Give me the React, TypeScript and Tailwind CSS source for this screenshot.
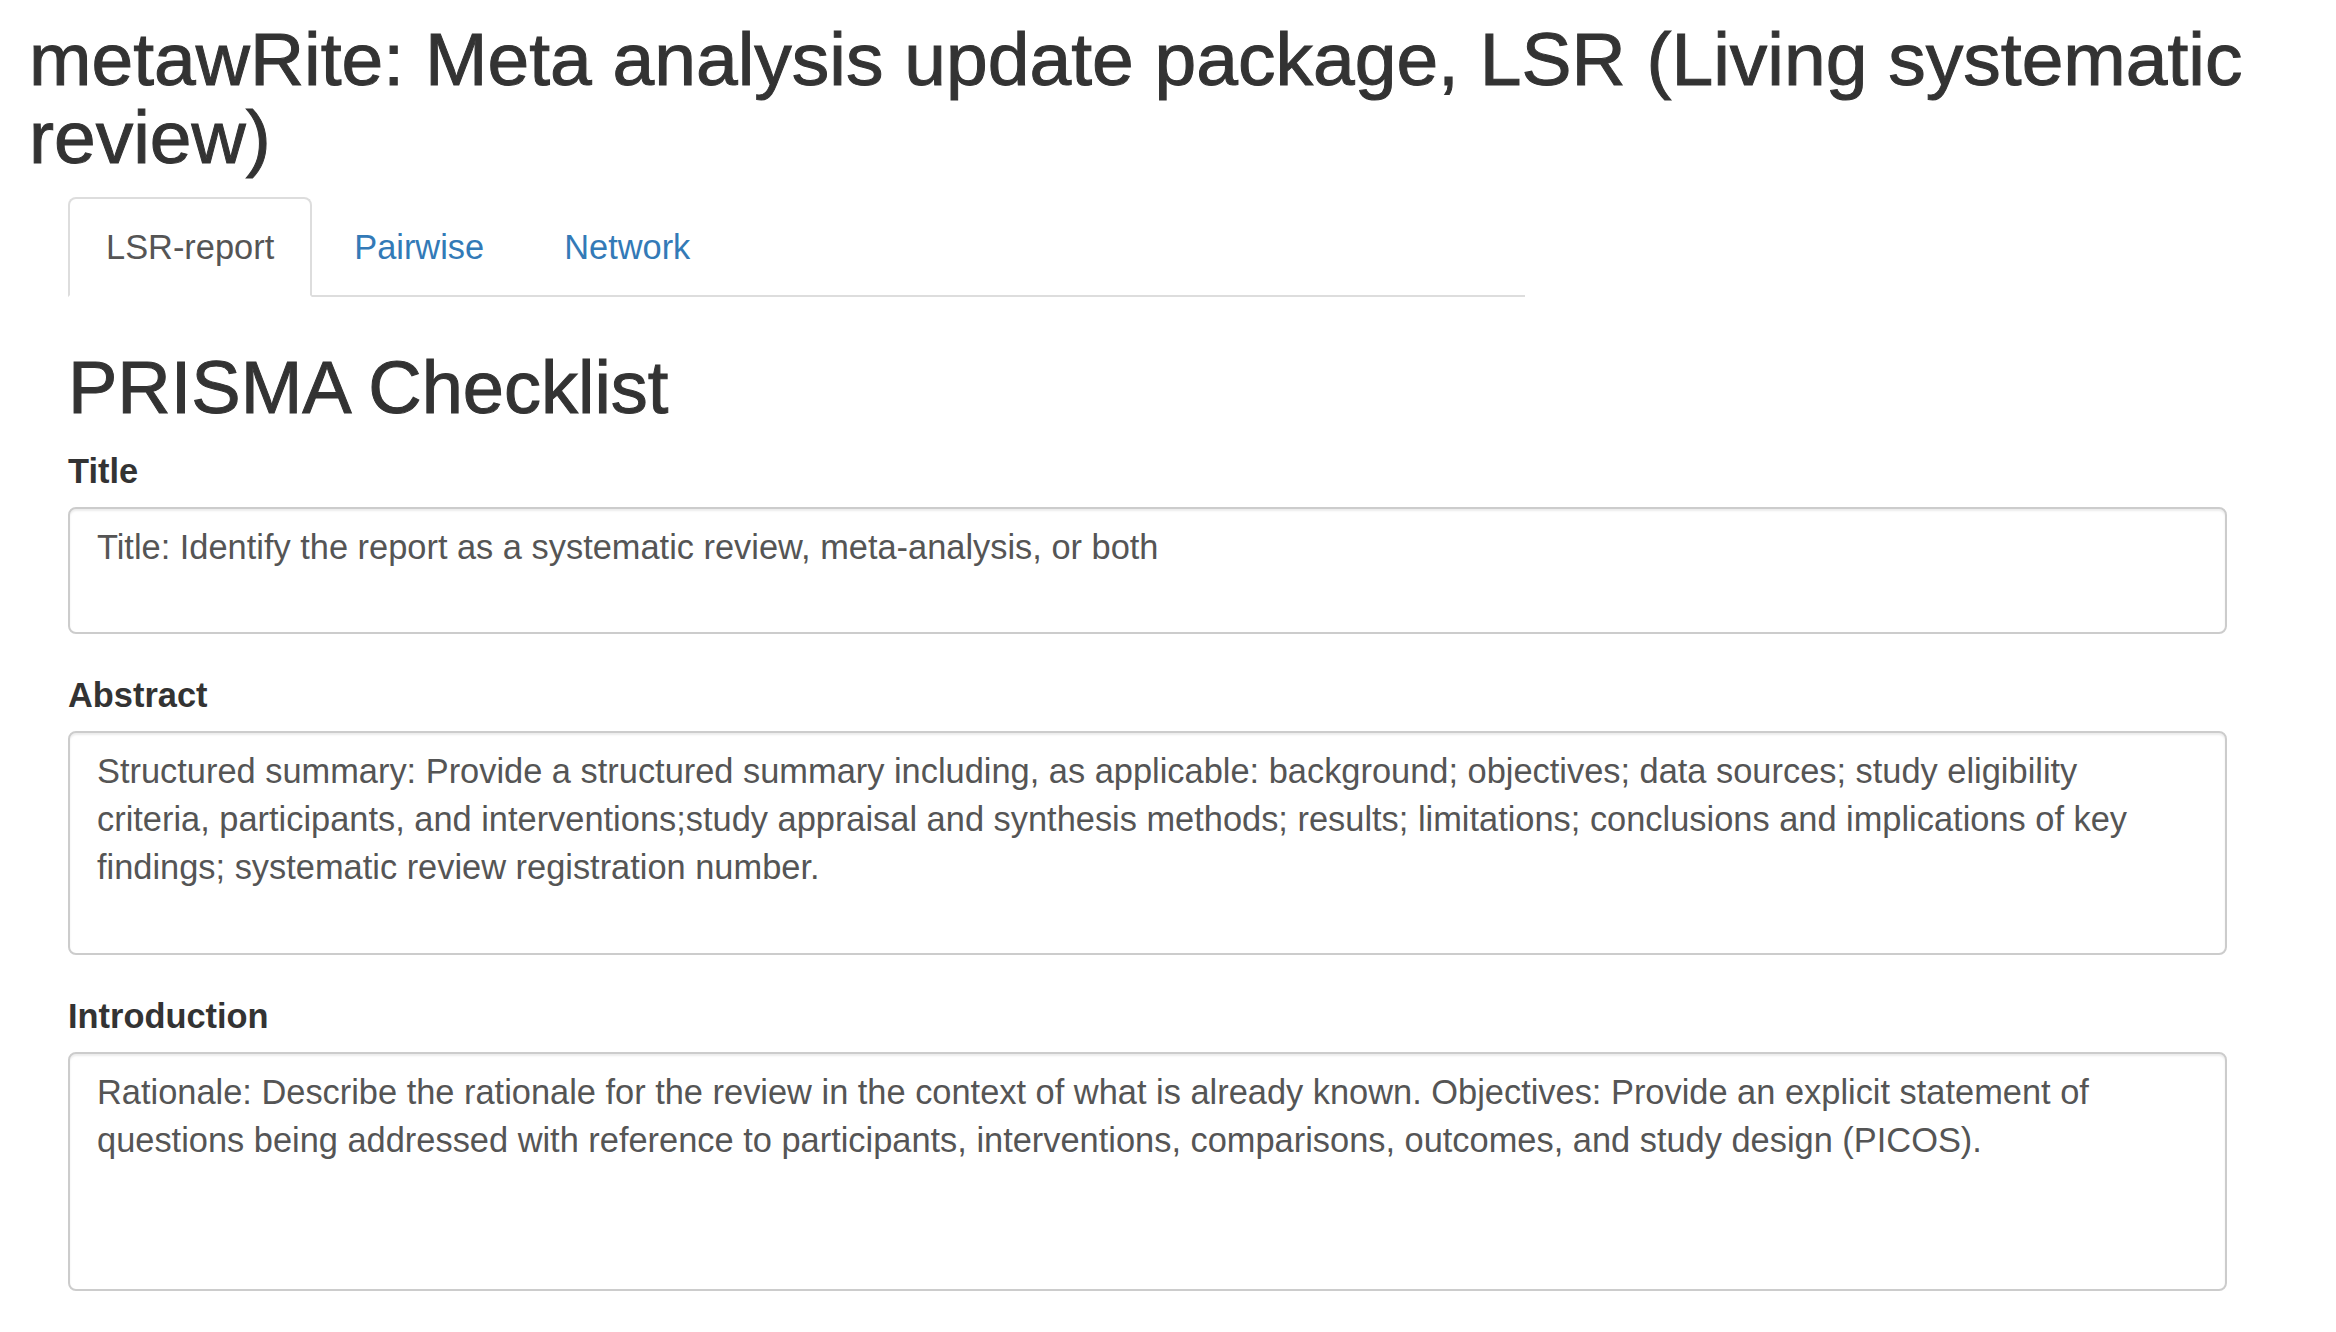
import React from "react";

interface Section {
    label: string;
    boxClass: string;
    lines: string[];
}

const sections: Section[] = [
    {
        label: "Title",
        boxClass: "h-[127px]",
        lines: ["Title: Identify the report as a systematic review, meta-analysis, or both"],
    },
    {
        label: "Abstract",
        boxClass: "h-[224px]",
        lines: [
            "Structured summary: Provide a structured summary including, as applicable: background; objectives; data sources; study eligibility",
            "criteria, participants, and interventions;study appraisal and synthesis methods; results; limitations; conclusions and implications of key",
            "findings; systematic review registration number.",
        ],
    },
    {
        label: "Introduction",
        boxClass: "h-[239px]",
        lines: [
            "Rationale: Describe the rationale for the review in the context of what is already known. Objectives: Provide an explicit statement of",
            "questions being addressed with reference to participants, interventions, comparisons, outcomes, and study design (PICOS).",
        ],
    },
];

const tabs = ["LSR-report", "Pairwise", "Network"];

const App: React.FC = () => {
    return (
        <div className="min-h-screen bg-white px-[29px] font-['Liberation_Sans',Arial,sans-serif] text-[#333]">
            <h1 className="pt-[20px] text-[75px] leading-[78px] font-normal [-webkit-text-stroke:1px_#333]">
                metawRite: Meta analysis update package, LSR (Living systematic review)
            </h1>

            <div className="ml-[39px]">
                {/* tab strip */}
                <div className="mt-[21px] flex w-[1457px] border-b-2 border-[#ddd]">
                    {tabs.map((t, i) =>
                        i === 0 ? (
                            <div
                                key={t}
                                className="-mb-[2px] mr-[4px] rounded-t-[8px] border-2 border-[#ddd] border-b-white bg-white px-[36px] py-[24px] text-[34.4px] leading-[48px] text-[#555]"
                            >
                                {t}
                            </div>
                        ) : (
                            <div
                                key={t}
                                className="-mb-[2px] mr-[4px] rounded-t-[8px] border-2 border-transparent px-[36px] py-[24px] text-[34.4px] leading-[48px] text-[#337ab7]"
                            >
                                {t}
                            </div>
                        )
                    )}
                </div>

                <div className="w-[2159px]">
                    <h2 className="mt-[50px] mb-[19px] text-[74px] leading-[81px] font-normal [-webkit-text-stroke:1px_#333]">
                        PRISMA Checklist
                    </h2>

                    {sections.map(s => (
                        <div key={s.label} className="mb-[37px]">
                            <label className="mb-[12px] block text-[34.4px] leading-[48px] font-bold text-[#333]">
                                {s.label}
                            </label>
                            <div
                                className={
                                    "rounded-[8px] border-2 border-[#ccc] bg-white px-[27px] py-[14px] text-[34.4px] leading-[48px] text-[#555] shadow-[inset_0_2px_2px_rgba(0,0,0,0.075)] " +
                                    s.boxClass
                                }
                            >
                                {s.lines.map((l, j) => (
                                    <div key={j} className="whitespace-nowrap">
                                        {l}
                                    </div>
                                ))}
                            </div>
                        </div>
                    ))}
                </div>
            </div>
        </div>
    );
};

export default App;
